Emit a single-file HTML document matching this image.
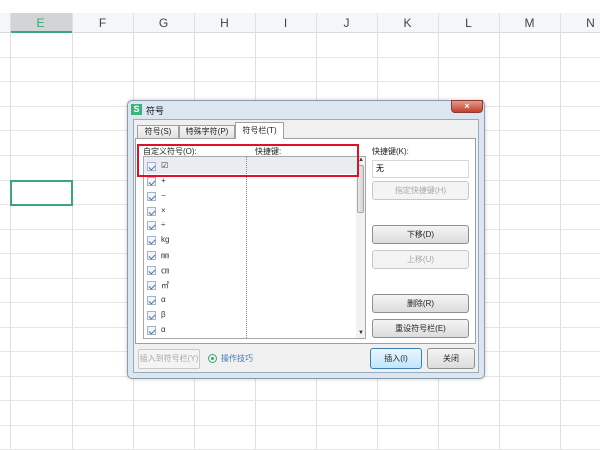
<!DOCTYPE html>
<html><head><meta charset="utf-8"><style>
*{margin:0;padding:0;box-sizing:border-box}
body{width:600px;height:450px;overflow:hidden;background:#fff;font-family:"Liberation Sans","Noto Sans CJK SC",sans-serif;position:relative}
.a{position:absolute}
.vl{position:absolute;top:13px;bottom:0;width:1px;background:#e0e0e0}
.hl{position:absolute;left:0;right:0;height:1px;background:#e6e6e6}
.ch{position:absolute;top:13px;height:20px;font-size:12px;color:#444;text-align:center;line-height:20px;width:61px}
.btn{position:absolute;height:19px;border:1px solid #8e8f8f;border-radius:3px;background:linear-gradient(#f4f4f4,#dcdcdc);font-size:8px;text-align:center;line-height:17px;color:#222}
.dis{border-color:#c8c8c8;background:#f4f4f4;color:#a8a8a8}
.row{position:absolute;left:144px;width:212px;height:15px;font-size:8px;color:#333}
.cb{position:absolute;left:3px;top:3px;width:9px;height:9px;border:1px solid #a5b5c9;background:#f2f6fa}
.cb:after{content:"";position:absolute;left:2px;top:1px;width:3px;height:5px;border:solid #4a6a96;border-width:0 1px 1px 0;transform:rotate(45deg)}
.row span{position:absolute;left:17px;top:2px}
</style></head><body>
<div class="a" style="left:0;top:13px;width:600px;height:20px;background:#f5f6f7;border-bottom:1px solid #dadada"></div>
<div class="a" style="left:10px;top:13px;width:62px;height:20px;background:#d2d4d6;border-bottom:2px solid #3aa67c"></div>
<div class="ch" style="left:10px;color:#3aa67c">E</div>
<div class="ch" style="left:72px">F</div><div class="ch" style="left:133px">G</div><div class="ch" style="left:194px">H</div><div class="ch" style="left:255px">I</div><div class="ch" style="left:316px">J</div><div class="ch" style="left:377px">K</div><div class="ch" style="left:438px">L</div><div class="ch" style="left:499px">M</div><div class="ch" style="left:560px">N</div>
<div class="vl" style="left:10px"></div><div class="vl" style="left:72px"></div><div class="vl" style="left:133px"></div><div class="vl" style="left:194px"></div><div class="vl" style="left:255px"></div><div class="vl" style="left:316px"></div><div class="vl" style="left:377px"></div><div class="vl" style="left:438px"></div><div class="vl" style="left:499px"></div><div class="vl" style="left:560px"></div>
<div class="hl" style="top:57px"></div><div class="hl" style="top:81px"></div><div class="hl" style="top:106px"></div><div class="hl" style="top:130px"></div><div class="hl" style="top:155px"></div><div class="hl" style="top:180px"></div><div class="hl" style="top:204px"></div><div class="hl" style="top:229px"></div><div class="hl" style="top:253px"></div><div class="hl" style="top:278px"></div><div class="hl" style="top:302px"></div><div class="hl" style="top:327px"></div><div class="hl" style="top:351px"></div><div class="hl" style="top:376px"></div><div class="hl" style="top:400px"></div><div class="hl" style="top:425px"></div><div class="hl" style="top:449px"></div>
<div class="a" style="left:10px;top:180px;width:63px;height:26px;border:2px solid #3aa67c"></div>

<!-- dialog -->
<div class="a" style="left:127px;top:100px;width:358px;height:279px;background:#dbe6f1;border:1px solid #8a9bb0;border-radius:5px;box-shadow:0 0 4px rgba(0,0,0,.2)"></div>
<div class="a" style="left:131px;top:104px;width:11px;height:11px;background:#3bb37a;color:#fff;font-size:9px;font-weight:bold;text-align:center;line-height:11px">S</div>
<div class="a" style="left:146px;top:104px;font-size:9px;color:#111">符号</div>
<div class="a" style="left:451px;top:100px;width:32px;height:13px;background:linear-gradient(#e59a8c,#c2412c);border:1px solid #8a3a2e;border-radius:0 0 4px 4px;color:#fff;font-size:9px;text-align:center;line-height:11px;font-weight:bold">×</div>
<div class="a" style="left:133px;top:119px;width:346px;height:254px;background:#f0f0f0;border:1px solid #9aabbd"></div>
<!-- tabs -->
<div class="a" style="left:135px;top:138px;width:341px;height:206px;background:#fff;border:1px solid #a0a0a0"></div>
<div class="a" style="left:137px;top:125px;width:42px;height:14px;border:1px solid #a0a0a0;background:linear-gradient(#f5f5f5,#e2e2e2);font-size:8px;text-align:center;line-height:12px;color:#222">符号(S)</div>
<div class="a" style="left:179px;top:125px;width:56px;height:14px;border:1px solid #a0a0a0;background:linear-gradient(#f5f5f5,#e2e2e2);font-size:8px;text-align:center;line-height:12px;color:#222">特殊字符(P)</div>
<div class="a" style="left:235px;top:122px;width:49px;height:17px;border:1px solid #a0a0a0;border-bottom:none;background:#fff;font-size:8px;text-align:center;line-height:15px;color:#222">符号栏(T)</div>
<div class="a" style="left:143px;top:146px;font-size:8px;color:#222">自定义符号(O):</div>
<div class="a" style="left:255px;top:146px;font-size:8px;color:#222">快捷键:</div>
<!-- list -->
<div class="a" style="left:143px;top:156px;width:223px;height:183px;background:#fff;border:1px solid #a8a8a8"></div>
<div class="a" style="left:144px;top:157px;width:212px;height:17px;background:#e9edf3"></div>
<div class="a" style="left:246px;top:157px;width:0;height:181px;border-left:1px dotted #888"></div>
<div class="row" style="top:159px"><div class="cb"></div><span>☑</span></div>
<div class="row" style="top:174px"><div class="cb"></div><span>+</span></div>
<div class="row" style="top:189px"><div class="cb"></div><span>−</span></div>
<div class="row" style="top:204px"><div class="cb"></div><span>×</span></div>
<div class="row" style="top:218px"><div class="cb"></div><span>÷</span></div>
<div class="row" style="top:233px"><div class="cb"></div><span>kg</span></div>
<div class="row" style="top:248px"><div class="cb"></div><span>㎜</span></div>
<div class="row" style="top:263px"><div class="cb"></div><span>㎝</span></div>
<div class="row" style="top:278px"><div class="cb"></div><span>㎡</span></div>
<div class="row" style="top:293px"><div class="cb"></div><span>α</span></div>
<div class="row" style="top:308px"><div class="cb"></div><span>β</span></div>
<div class="row" style="top:323px"><div class="cb"></div><span>α</span></div>
<div class="a" style="left:356px;top:157px;width:9px;height:181px;background:#f2f2f2"></div>
<div class="a" style="left:357px;top:165px;width:7px;height:48px;background:linear-gradient(90deg,#e8e8e8,#d6d6d6);border:1px solid #a8a8a8;border-radius:2px"></div>
<div class="a" style="left:358px;top:157px;font-size:6px;color:#333">▲</div>
<div class="a" style="left:358px;top:330px;font-size:6px;color:#333">▼</div>
<div class="a" style="left:137px;top:144px;width:222px;height:33px;border:2px solid #e0102a"></div>
<!-- right -->
<div class="a" style="left:372px;top:146px;font-size:8px;color:#222">快捷键(K):</div>
<div class="a" style="left:372px;top:160px;width:97px;height:18px;border:1px solid #d8d8d8;background:#fff;font-size:8px;line-height:16px;padding-left:3px">无</div>
<div class="btn dis" style="left:372px;top:181px;width:97px">指定快捷键(H)</div>
<div class="btn" style="left:372px;top:225px;width:97px">下移(D)</div>
<div class="btn dis" style="left:372px;top:250px;width:97px">上移(U)</div>
<div class="btn" style="left:372px;top:294px;width:97px">删除(R)</div>
<div class="btn" style="left:372px;top:319px;width:97px">重设符号栏(E)</div>
<!-- bottom -->
<div class="btn dis" style="left:138px;top:349px;width:62px;height:20px;border-radius:2px">插入到符号栏(Y)</div>
<div class="a" style="left:208px;top:354px;width:9px;height:9px;border:1px solid #3aa67c;border-radius:50%"></div>
<div class="a" style="left:211px;top:357px;width:3px;height:3px;background:#3aa67c;border-radius:50%"></div>
<div class="a" style="left:221px;top:353px;font-size:8px;color:#3b77c4">操作技巧</div>
<div class="btn" style="left:370px;top:348px;width:52px;height:21px;line-height:19px;border-color:#3c7fb1;background:linear-gradient(#eaf6fd,#bee6fd)">插入(I)</div>
<div class="btn" style="left:427px;top:348px;width:48px;height:21px;line-height:19px">关闭</div>
</body></html>
